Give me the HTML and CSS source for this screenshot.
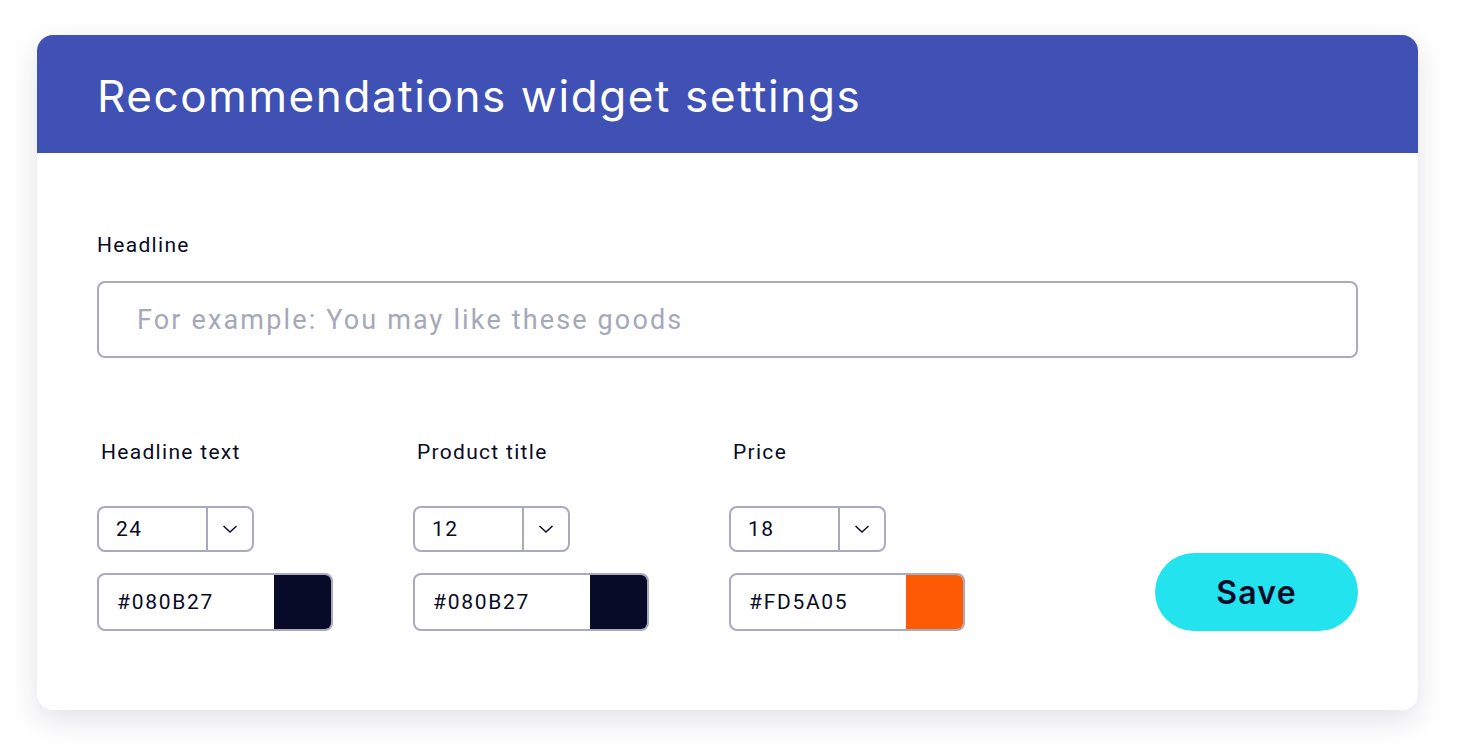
FILE: index.html
```html
<!DOCTYPE html>
<html>
<head>
<meta charset="utf-8">
<link rel="stylesheet" href="styles.css">
</head>
<body>
<div class="card">
  <div class="card-header">
    <h1 class="title">Recommendations widget settings</h1>
  </div>
  <div class="card-body">
    <div class="field-label">Headline</div>
    <div class="text-input">For example: You may like these goods</div>
    <div class="settings-row">
      <div class="setting">
        <div class="setting-label">Headline text</div>
        <div class="select">
          <span class="select-value">24</span>
          <span class="select-arrow"><svg width="16" height="10" viewBox="0 0 16 10"><path d="M1.5 2 L8 8 L14.5 2" fill="none" stroke="#080B27" stroke-width="1.4"/></svg></span>
        </div>
        <div class="color-input">
          <span class="color-value">#080B27</span>
          <span class="swatch swatch-dark"></span>
        </div>
      </div>
      <div class="setting">
        <div class="setting-label">Product title</div>
        <div class="select">
          <span class="select-value">12</span>
          <span class="select-arrow"><svg width="16" height="10" viewBox="0 0 16 10"><path d="M1.5 2 L8 8 L14.5 2" fill="none" stroke="#080B27" stroke-width="1.4"/></svg></span>
        </div>
        <div class="color-input">
          <span class="color-value">#080B27</span>
          <span class="swatch swatch-dark"></span>
        </div>
      </div>
      <div class="setting">
        <div class="setting-label">Price</div>
        <div class="select">
          <span class="select-value">18</span>
          <span class="select-arrow"><svg width="16" height="10" viewBox="0 0 16 10"><path d="M1.5 2 L8 8 L14.5 2" fill="none" stroke="#080B27" stroke-width="1.4"/></svg></span>
        </div>
        <div class="color-input">
          <span class="color-value">#FD5A05</span>
          <span class="swatch swatch-orange"></span>
        </div>
      </div>
      <button class="save-btn">Save</button>
    </div>
  </div>
</div>
</body>
</html>
```
FILE: styles.css
```css
html, body {
  margin: 0;
  padding: 0;
  background: #ffffff;
}
body {
  padding: 35px 43px 44px 37px;
  font-family: Roboto, "Liberation Sans", sans-serif;
  color: #080B27;
}
.card {
  width: 1381px;
  height: 675px;
  border-radius: 16px;
  background: #ffffff;
  box-shadow: 0 10px 30px rgba(30, 30, 70, 0.13);
  overflow: hidden;
}
.card-header {
  height: 118px;
  background: #3F51B5;
  display: flex;
  align-items: center;
  padding-left: 60px;
}
.title {
  margin: 0;
  font-family: Inter, "Noto Sans", sans-serif;
  font-weight: 400;
  font-size: 44px;
  line-height: 50px;
  color: #ffffff;
  letter-spacing: 1.6px;
  padding-top: 4px;
}
.card-body {
  padding: 80px 60px 0 60px;
}
.field-label {
  font-size: 21px;
  line-height: 24px;
  height: 24px;
  letter-spacing: 1.3px;
}
.text-input {
  margin-top: 24px;
  height: 73px;
  border: 2px solid #A9AABD;
  border-radius: 8px;
  display: flex;
  align-items: center;
  padding-left: 38px;
  font-size: 27px;
  letter-spacing: 2.15px;
  color: #A5A7BA;
}
.settings-row {
  margin-top: 82px;
  display: flex;
  align-items: flex-end;
}
.setting {
  width: 316px;
  display: flex;
  flex-direction: column;
}
.setting-label {
  font-size: 21px;
  line-height: 24px;
  letter-spacing: 1.3px;
  padding-left: 4px;
  margin-bottom: 42px;
}
.select {
  width: 157px;
  height: 46px;
  box-sizing: border-box;
  border: 2px solid #A9AABD;
  border-radius: 8px;
  display: flex;
  align-items: center;
}
.select-value {
  width: 109px;
  box-sizing: border-box;
  padding-left: 17px;
  font-size: 21px;
  letter-spacing: 1.5px;
  height: 100%;
  display: flex;
  align-items: center;
  border-right: 2px solid #A9AABD;
}
.select-arrow {
  flex: 1;
  display: flex;
  align-items: center;
  justify-content: center;
}
.select-arrow svg {
  display: block;
}
.color-input {
  margin-top: 21px;
  width: 236px;
  height: 58px;
  box-sizing: border-box;
  border: 2px solid #A9AABD;
  border-radius: 8px;
  display: flex;
  overflow: hidden;
}
.color-value {
  flex: 1;
  display: flex;
  align-items: center;
  padding-left: 18px;
  font-size: 21px;
  letter-spacing: 1.7px;
}
.swatch {
  width: 57px;
  height: 100%;
}
.swatch-dark {
  background: #080B27;
}
.swatch-orange {
  background: #FD5A05;
}
.save-btn {
  margin-left: auto;
  width: 203px;
  height: 78px;
  border: none;
  border-radius: 39px;
  background: #22E3EE;
  font-family: Inter, "Noto Sans", sans-serif;
  font-weight: 600;
  font-size: 32px;
  color: #080B27;
  letter-spacing: 1.2px;
  padding: 0;
}
```
